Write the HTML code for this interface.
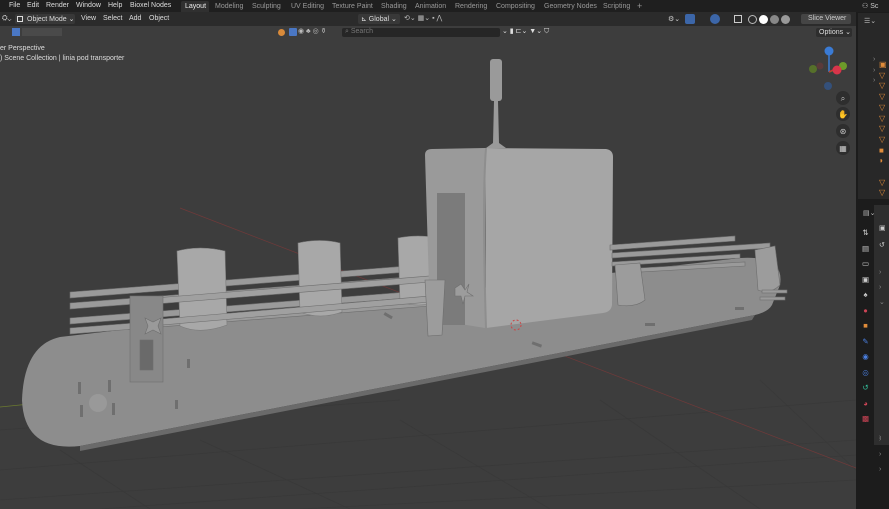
<!DOCTYPE html>
<html><head><meta charset="utf-8"><style>
*{margin:0;padding:0;box-sizing:border-box}
body{width:889px;height:509px;overflow:hidden;background:#3d3d3d;font-family:"Liberation Sans",sans-serif;font-size:7px;color:#ddd;position:relative}
.abs{position:absolute}
.t{position:absolute;white-space:nowrap}
</style></head><body>
<div class="abs" style="left:0;top:0;width:889px;height:12px;background:#1f1f1f"></div>
<div class="t" style="left:9px;top:2px">File</div>
<div class="t" style="left:27px;top:2px">Edit</div>
<div class="t" style="left:46px;top:2px">Render</div>
<div class="t" style="left:76px;top:2px">Window</div>
<div class="t" style="left:108px;top:2px">Help</div>
<div class="t" style="left:130px;top:2px">Bioxel Nodes</div>
<div class="abs" style="left:181px;top:1px;width:28px;height:11px;background:#303030;border-radius:2px 2px 0 0"></div>
<div class="t" style="left:185px;top:3px;color:#eee">Layout</div>
<div class="t" style="left:215px;top:3px;color:#999">Modeling</div>
<div class="t" style="left:252px;top:3px;color:#999">Sculpting</div>
<div class="t" style="left:291px;top:3px;color:#999">UV Editing</div>
<div class="t" style="left:332px;top:3px;color:#999">Texture Paint</div>
<div class="t" style="left:381px;top:3px;color:#999">Shading</div>
<div class="t" style="left:415px;top:3px;color:#999">Animation</div>
<div class="t" style="left:455px;top:3px;color:#999">Rendering</div>
<div class="t" style="left:496px;top:3px;color:#999">Compositing</div>
<div class="t" style="left:544px;top:3px;color:#999">Geometry Nodes</div>
<div class="t" style="left:603px;top:3px;color:#999">Scripting</div>
<div class="t" style="left:637px;top:1px;color:#999;font-size:9px">+</div>
<div class="t" style="left:862px;top:2px;color:#ccc">⚇ Sc</div>
<div class="abs" style="left:0;top:12px;width:856px;height:14px;background:#2b2b2b"></div>
<div class="abs" style="left:15px;top:14px;width:60px;height:10px;background:#383838;border-radius:2px"></div>
<div class="abs" style="left:17px;top:16px;width:6px;height:6px;border:1px solid #ddd"></div>
<div class="t" style="left:27px;top:15px">Object Mode ⌄</div>
<div class="t" style="left:81px;top:15px">View</div>
<div class="t" style="left:103px;top:15px">Select</div>
<div class="t" style="left:129px;top:15px">Add</div>
<div class="t" style="left:149px;top:15px">Object</div>
<div class="t" style="left:2px;top:15px">⛭⌄</div>
<div class="abs" style="left:358px;top:14px;width:42px;height:10px;background:#383838;border-radius:2px"></div>
<div class="t" style="left:361px;top:15px">⊾ Global ⌄</div>
<div class="t" style="left:404px;top:14px;color:#bbb">⟲⌄ ▦⌄ ▪ ⋀</div>
<div class="abs" style="left:685px;top:14px;width:10px;height:10px;background:#3c66a8;border-radius:2px"></div>
<div class="abs" style="left:710px;top:14px;width:10px;height:10px;background:#3c66a8;border-radius:5px"></div>
<div class="t" style="left:668px;top:15px;color:#ccc">⚙⌄</div>
<div class="abs" style="left:734px;top:15px;width:8px;height:8px;border:1px solid #ccc"></div>
<div class="abs" style="left:748px;top:15px;width:9px;height:9px;border:1px solid #bbb;border-radius:5px"></div>
<div class="abs" style="left:759px;top:15px;width:9px;height:9px;background:#fff;border-radius:5px"></div>
<div class="abs" style="left:770px;top:15px;width:9px;height:9px;background:#888;border-radius:5px"></div>
<div class="abs" style="left:781px;top:15px;width:9px;height:9px;background:#999;border-radius:5px"></div>
<div class="abs" style="left:801px;top:14px;width:50px;height:10px;background:#454545;border-radius:2px"></div>
<div class="t" style="left:808px;top:15px;color:#ccc">Slice Viewer</div>
<div class="abs" style="left:12px;top:28px;width:8px;height:8px;background:#4a77c4"></div>
<div class="abs" style="left:22px;top:28px;width:40px;height:8px;background:#4a4a4a"></div>
<div class="abs" style="left:278px;top:29px;width:7px;height:7px;background:#d88a3a;border-radius:4px"></div>
<div class="abs" style="left:289px;top:28px;width:8px;height:8px;background:#4a77c4;border-radius:1px"></div>
<div class="t" style="left:298px;top:27px;color:#bbb">◉ ♣ ◎ ⚱</div>
<div class="abs" style="left:342px;top:28px;width:158px;height:9px;background:#262626;border-radius:2px"></div>
<div class="t" style="left:345px;top:28px;color:#777">⌕ Search</div>
<div class="t" style="left:502px;top:27px;color:#ddd">⌄ ▮ ⊏⌄ ▼⌄ ⛉</div>
<div class="abs" style="left:816px;top:28px;width:36px;height:9px;background:#2e2e2e;border-radius:2px"></div>
<div class="t" style="left:819px;top:28px;color:#ddd">Options ⌄</div>
<div class="t" style="left:0px;top:45px">er Perspective</div>
<div class="t" style="left:0px;top:55px">) Scene Collection | linia pod transporter</div>
<svg class="abs" style="left:0;top:40px" width="856" height="469" viewBox="0 40 856 469">
<g stroke="#393939" stroke-width="0.8" fill="none">
<path d="M0 470 L856 400 M0 500 L856 440 M100 509 L856 455 M300 509 L856 480 M0 430 L400 400"/>
<path d="M150 509 L60 450 M350 509 L200 440 M550 509 L400 420 M760 509 L600 400 M856 470 L760 380"/>
</g>
<line x1="180" y1="208" x2="856" y2="468" stroke="#703a3a" stroke-width="0.7"/>
<line x1="0" y1="407" x2="30" y2="404" stroke="#6b7a30" stroke-width="0.8"/>
<path d="M60 337 L740 258 Q785 255 780 285 L772 305 Q768 312 755 315 L80 446 Q24 452 22 400 Q24 345 60 337 Z" fill="#8d8d8d"/>
<path d="M80 446 L755 315 L752 320 L80 451 Z" fill="#6a6a6a"/>
<g fill="#9a9a9a" stroke="#6e6e6e" stroke-width="0.6">
<path d="M70 292 L460 262 L460 268 L70 298Z"/>
<path d="M70 303 L460 273 L460 279 L70 309Z"/>
<path d="M70 318 L460 288 L460 294 L70 324Z"/>
<path d="M70 328 L430 300 L430 306 L70 334Z"/>
</g>
<g fill="#a8a8a8" stroke="#7a7a7a" stroke-width="0.6">
<path d="M177 251 Q200 245 225 251 L227 325 Q200 335 180 326 Z"/>
<path d="M298 243 Q320 238 340 243 L342 312 Q320 320 300 312 Z"/>
<path d="M398 238 Q418 234 438 238 L438 302 Q418 308 400 302 Z"/>
</g>
<g fill="#a0a0a0" stroke="#6e6e6e" stroke-width="0.6">
<path d="M130 300 L430 276 L430 282 L130 306Z"/>
<path d="M150 320 L430 296 L430 302 L150 326Z"/>
<rect x="130" y="296" width="33" height="86" fill="#888"/>
<rect x="140" y="340" width="13" height="30" fill="#6a6a6a"/>
<path d="M145 318 l8 4 l8 -4 l-3 8 l3 8 l-8 -4 l-8 4 l3 -8z" fill="#9a9a9a"/>
</g>
<path d="M425 155 Q425 149 432 149 L485 148 L485 328 L448 322 L430 318 Z" fill="#9a9a9a"/>
<rect x="437" y="193" width="28" height="132" fill="#7b7b7b"/>
<path d="M485 148 L606 149 Q613 150 613 157 L612 305 Q611 312 603 313 L486 328 Z" fill="#a6a6a6"/>
<path d="M486 148 Q482 200 486 328" stroke="#8e8e8e" stroke-width="2" fill="none"/>
<rect x="490" y="59" width="12" height="42" rx="3" fill="#9a9a9a"/>
<path d="M494 101 L498 101 L499 143 L506 148 L486 148 L493 143 Z" fill="#9a9a9a"/>
<g fill="#9c9c9c" stroke="#6e6e6e" stroke-width="0.6">
<path d="M425 280 L445 280 L442 335 L428 336 Z"/>
<path d="M455 288 l6 -4 l4 6 l4 -6 l-2 8 l6 4 l-8 0 l-2 8 l-2 -8 l-6 0z"/>
</g>
<g fill="#9a9a9a" stroke="#6e6e6e" stroke-width="0.6">
<path d="M610 245 L735 236 L735 241 L610 250Z"/>
<path d="M612 253 L770 243 L770 248 L612 258Z"/>
<path d="M612 262 L740 254 L740 258 L612 266Z"/>
<path d="M640 268 L745 262 L745 266 L640 272Z"/>
<path d="M615 265 L640 263 L645 300 Q635 308 618 305 Z" fill="#9c9c9c"/>
<path d="M755 250 L775 246 L780 285 Q770 295 758 290 Z" fill="#9c9c9c"/>
<rect x="762" y="290" width="25" height="3" />
<rect x="760" y="297" width="25" height="3" />
</g>
<g fill="#6f6f6f">
<rect x="532" y="343" width="10" height="3" transform="rotate(20 537 344)"/>
<rect x="645" y="323" width="10" height="3"/>
<rect x="735" y="307" width="9" height="3"/>
<rect x="187" y="359" width="3" height="9"/>
<rect x="384" y="314" width="9" height="3" transform="rotate(30 388 315)"/>
<rect x="175" y="400" width="3" height="9"/>
<rect x="78" y="382" width="3" height="12"/>
<rect x="108" y="380" width="3" height="12"/>
<rect x="80" y="405" width="3" height="12"/>
<rect x="112" y="403" width="3" height="12"/>
<circle cx="98" cy="403" r="9" fill="#999"/>
</g>
<circle cx="516" cy="325" r="5" fill="none" stroke="#c44" stroke-dasharray="2 2"/>
<line x1="829" y1="52" x2="829" y2="72" stroke="#3a7bd5" stroke-width="1.5"/>
<line x1="829" y1="72" x2="843" y2="66" stroke="#6c9a2a" stroke-width="1.5"/>
<line x1="829" y1="72" x2="837" y2="68" stroke="#c33" stroke-width="1.5"/>
<circle cx="829" cy="51" r="4.5" fill="#3a7bd5"/>
<circle cx="843" cy="66" r="4" fill="#6c9a2a"/>
<circle cx="837" cy="70" r="4.5" fill="#d8354a"/>
<circle cx="813" cy="69" r="4" fill="#56702a"/>
<circle cx="820" cy="66" r="3.5" fill="#5a3a3a"/>
<circle cx="828" cy="86" r="4" fill="#34507a"/>
<g fill="#2e2e2e"><circle cx="843" cy="98" r="7"/><circle cx="843" cy="114" r="7"/><circle cx="843" cy="131" r="7"/><circle cx="843" cy="148" r="7"/></g>
<g fill="#ccc" font-size="8" font-family="DejaVu Sans" text-anchor="middle"><text x="843" y="101">⌕</text><text x="843" y="117">✋</text><text x="843" y="134">⊛</text><text x="843" y="151">▦</text></g>
</svg>
<div class="abs" style="left:856px;top:12px;width:33px;height:497px;background:#1c1c1c"></div>
<div class="abs" style="left:858px;top:13px;width:31px;height:186px;background:#282828"></div>
<div class="abs" style="left:874px;top:205px;width:15px;height:240px;background:#2e2e2e"></div>
<div class="t" style="left:864px;top:17px;color:#bbb">☰⌄</div>
<div class="t" style="left:873px;top:55px;line-height:10.7px;color:#888;font-size:7px">›<br>›<br>›</div>
<div class="abs" style="left:879px;top:60px;width:10px;height:130px;font-size:8px;line-height:10.7px;color:#e08c3a">▣<br>▽<br>▽<br>▽<br>▽<br>▽<br>▽<br>▽<br>■<br>◗<br><br>▽<br>▽</div>
<div class="t" style="left:863px;top:209px;color:#bbb">▤⌄</div>
<div class="abs" style="left:860px;top:225px;width:11px;height:200px;font-size:7.5px;line-height:15.5px;text-align:center">
<span style="color:#ccc">⇅</span><br><span style="color:#ccc">▤</span><br><span style="color:#ccc">▭</span><br><span style="color:#ccc">▣</span><br><span style="color:#ccc">♠</span><br><span style="color:#c45">●</span><br><span style="color:#e08c3a">■</span><br><span style="color:#4a7fe0">✎</span><br><span style="color:#4a7fe0">◉</span><br><span style="color:#4a7fe0">◎</span><br><span style="color:#3b9">↺</span><br><span style="color:#c45">◕</span><br><span style="color:#c45">▩</span></div>
<div class="t" style="left:879px;top:224px;color:#ccc">▣</div>
<div class="t" style="left:879px;top:241px;color:#ccc">↺</div>
<div class="abs" style="left:879px;top:265px;width:10px;height:180px;color:#888;line-height:15px">›<br>›<br>⌄<br><br><br><br><br><br><br><br><br>›</div>
<div class="abs" style="left:879px;top:432px;width:10px;height:60px;color:#888;line-height:15px">›<br>›<br>›</div>
</body></html>
